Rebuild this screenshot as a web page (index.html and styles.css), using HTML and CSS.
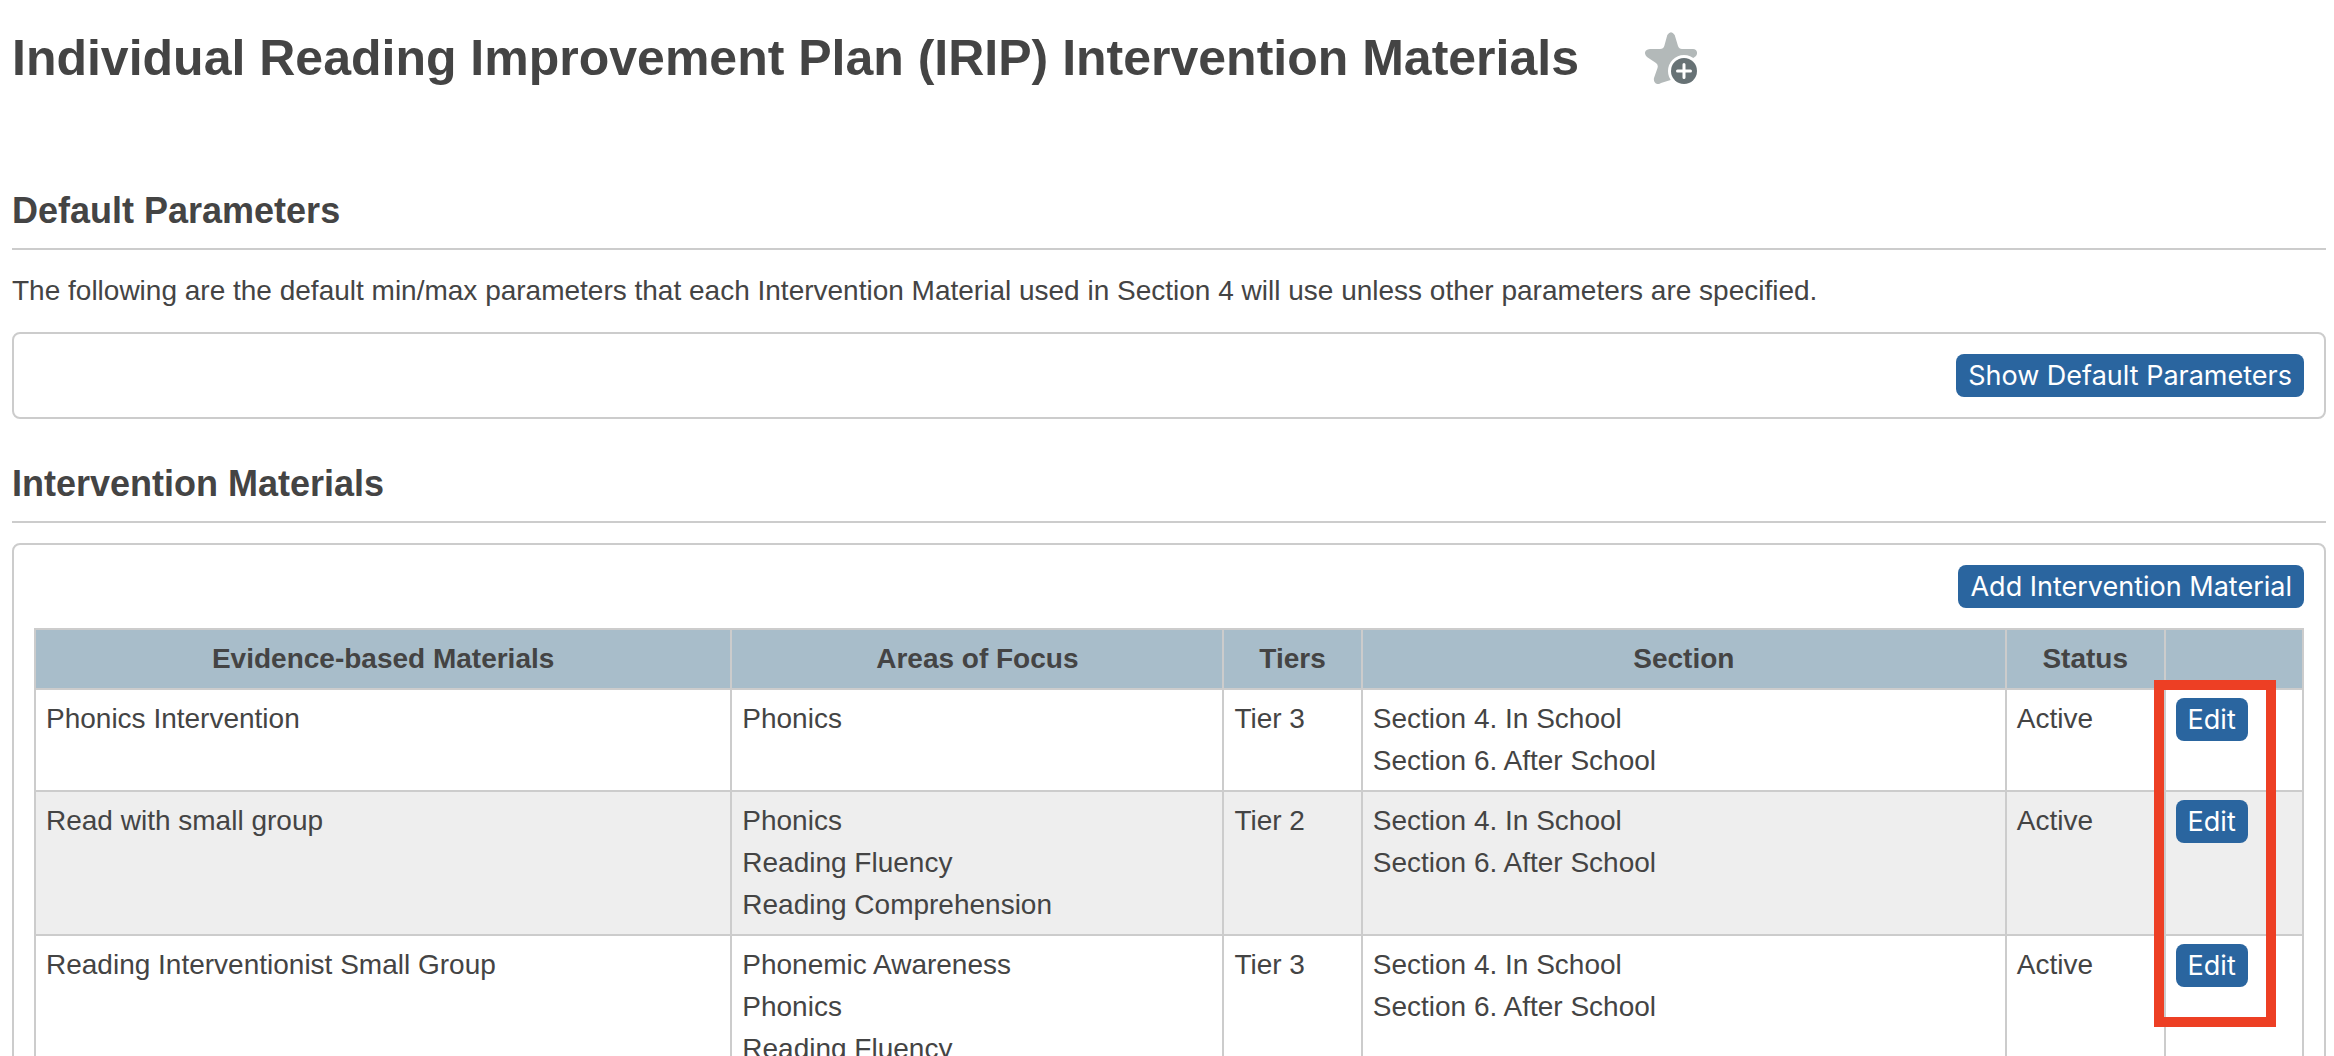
FILE: index.html
```html
<!DOCTYPE html>
<html lang="en">
<head>
    <meta charset="UTF-8">
    <meta name="viewport" content="width=device-width, initial-scale=1.0">
    <title>IRIP Intervention Materials</title>
    <link rel="stylesheet" href="styles.css">
</head>
<body>
    <header class="page-header">
        <h1>Individual Reading Improvement Plan (IRIP) Intervention Materials</h1>
        <button type="button" class="favorite-btn" aria-label="Add to favorites">
            <svg width="52" height="52" viewBox="0 0 52 52">
                <path d="M22.3 3 Q26 -2.6 29.7 3 L33 14 Q34 17 37 17 L48 17 Q52.500 17.500 52 22 Q51.500 24 49 25.500 L39 32 L32 46 L16 51 Q12 53.500 9.500 50 Q8.500 48 9 46 L12.500 36 Q13.500 33 11 31 L2 25 Q-1.500 21.500 1 18.500 Q2.500 17 5 17 L15 17 Q18.500 17 19.300 14 Z" fill="#b3b9b9"/>
                <circle cx="39" cy="39" r="16" fill="#fff"/>
                <circle cx="39" cy="39" r="13" fill="#677275"/>
                <path d="M39 32.500 V45.500 M32.500 39 H45.500" stroke="#fff" stroke-width="3" stroke-linecap="round"/>
            </svg>
        </button>
    </header>

    <section>
        <h2>Default Parameters</h2>
        <p>The following are the default min/max parameters that each Intervention Material used in Section 4 will use unless other parameters are specified.</p>
        <div class="box">
            <div class="box-actions">
                <button type="button" class="btn">Show Default Parameters</button>
            </div>
        </div>
    </section>

    <section>
        <h2>Intervention Materials</h2>
        <div class="box">
            <div class="box-actions">
                <button type="button" class="btn">Add Intervention Material</button>
            </div>
            <div class="table-wrap">
                <table>
                    <colgroup>
                        <col class="col-material">
                        <col class="col-focus">
                        <col class="col-tiers">
                        <col class="col-section">
                        <col class="col-status">
                        <col>
                    </colgroup>
                    <thead>
                        <tr>
                            <th>Evidence-based Materials</th>
                            <th>Areas of Focus</th>
                            <th>Tiers</th>
                            <th>Section</th>
                            <th>Status</th>
                            <th></th>
                        </tr>
                    </thead>
                    <tbody>
                        <tr>
                            <td>Phonics Intervention</td>
                            <td>Phonics</td>
                            <td>Tier 3</td>
                            <td>Section 4. In School<br>Section 6. After School</td>
                            <td>Active</td>
                            <td><button type="button" class="btn">Edit</button></td>
                        </tr>
                        <tr>
                            <td>Read with small group</td>
                            <td>Phonics<br>Reading Fluency<br>Reading Comprehension</td>
                            <td>Tier 2</td>
                            <td>Section 4. In School<br>Section 6. After School</td>
                            <td>Active</td>
                            <td><button type="button" class="btn">Edit</button></td>
                        </tr>
                        <tr>
                            <td>Reading Interventionist Small Group</td>
                            <td>Phonemic Awareness<br>Phonics<br>Reading Fluency</td>
                            <td>Tier 3</td>
                            <td>Section 4. In School<br>Section 6. After School</td>
                            <td>Active</td>
                            <td><button type="button" class="btn">Edit</button></td>
                        </tr>
                    </tbody>
                </table>
                <div class="highlight"></div>
            </div>
        </div>
    </section>
</body>
</html>
```
FILE: styles.css
```css
* {
    box-sizing: border-box;
}

body {
    height: 100vh;
    margin: 0;
    padding: 29px 8px 0 12px;
    overflow: hidden;
    background-color: #fff;
    color: #444;
    font-family: "Liberation Sans", Arial, sans-serif;
    font-size: 28px;
    line-height: 42px;
}

.page-header {
    display: flex;
    align-items: center;
    gap: 66px;
    margin-bottom: 103px;
}

h1 {
    margin: 0;
    font-size: 50px;
    line-height: 58px;
}

.favorite-btn {
    height: 52px;
    padding: 0;
    border: none;
    background: none;
    cursor: pointer;
}

.favorite-btn svg {
    display: block;
}

h2 {
    margin: 0 0 20px;
    padding-bottom: 16px;
    border-bottom: 2px solid #ccc;
    font-size: 36px;
    line-height: 42px;
}

p {
    margin: 0 0 20px;
}

section {
    margin-bottom: 44px;
}

.box {
    padding: 20px;
    border: 2px solid #ccc;
    border-radius: 8px;
}

.box-actions {
    display: flex;
    justify-content: flex-end;
}

.btn {
    display: block;
    height: 43px;
    padding: 0 12px;
    border: none;
    border-radius: 8px;
    background-color: #2a659f;
    color: #fff;
    font-family: Inter, sans-serif;
    font-size: 27px;
    line-height: 43px;
    cursor: pointer;
}

.table-wrap {
    position: relative;
    margin-top: 20px;
}

table {
    width: 100%;
    table-layout: fixed;
    border-collapse: collapse;
}

th,
td {
    padding: 8px 10px;
    border: 2px solid #ccc;
    text-align: left;
    vertical-align: top;
}

th {
    height: 60px;
    background-color: #a8bdca;
    text-align: center;
}

tbody tr:nth-child(even) {
    background-color: #eee;
}

.col-material {
    width: 30.7%;
}

.col-focus {
    width: 21.7%;
}

.col-tiers {
    width: 6.1%;
}

.col-section {
    width: 28.4%;
}

.col-status {
    width: 7%;
}

/* frame around the edit buttons */
.highlight {
    position: absolute;
    top: 52px;
    right: 28px;
    width: 122px;
    height: 347px;
    border: 10px solid #ed3f24;
    pointer-events: none;
}
```
